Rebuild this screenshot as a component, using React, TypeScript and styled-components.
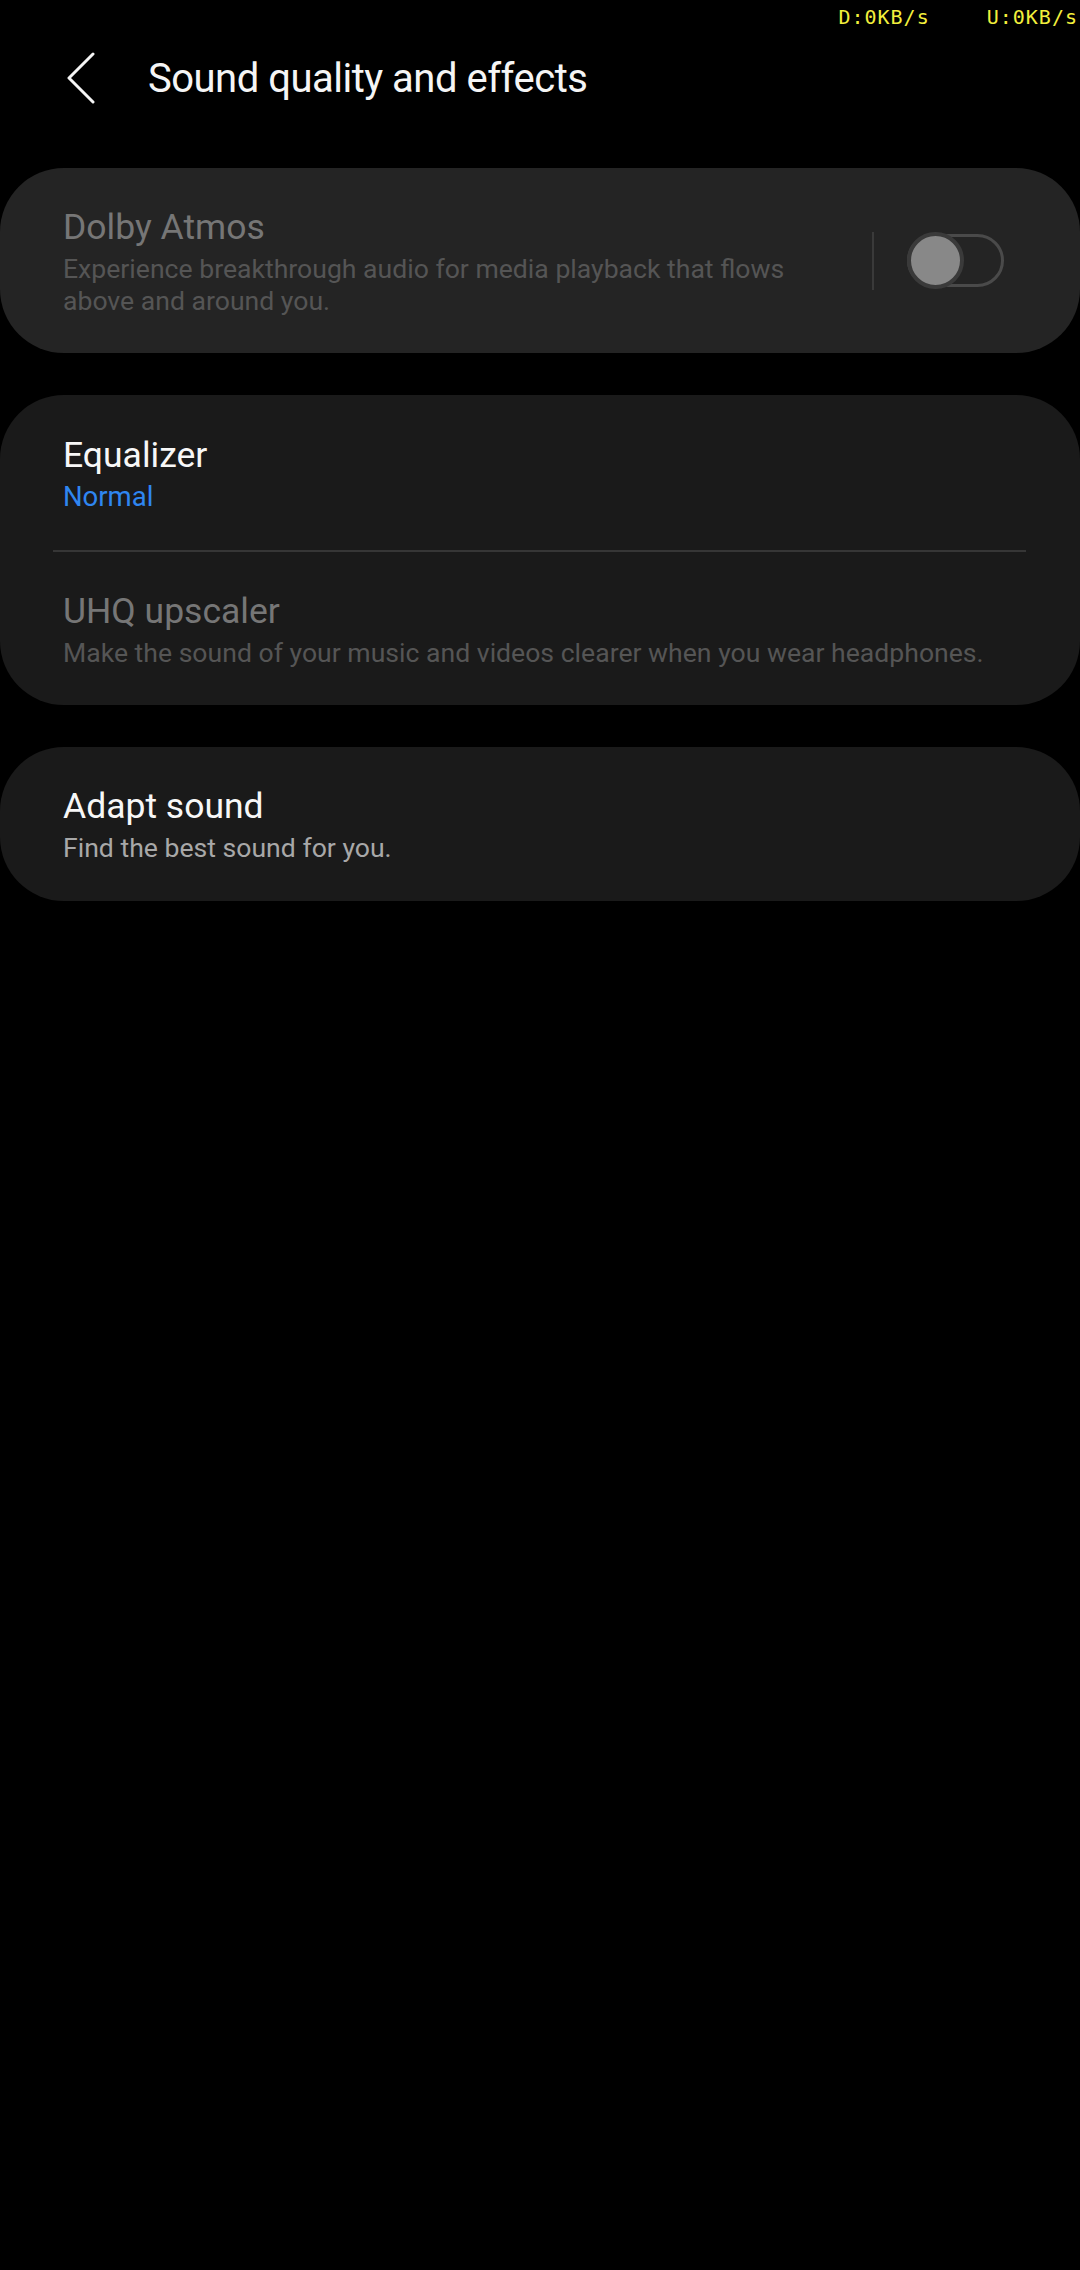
import React from "react";
import styled, { createGlobalStyle } from "styled-components";

const GlobalStyle = createGlobalStyle`
  html, body {
    margin: 0;
    padding: 0;
    background: #000;
  }
  body {
    font-family: Roboto, "Noto Sans", sans-serif;
    -webkit-font-smoothing: antialiased;
  }
`;

const Screen = styled.div`
  width: 1080px;
  min-height: 2270px;
  background: #000;
  display: flex;
  flex-direction: column;
`;

const StatusBar = styled.div`
  height: 34px;
  display: flex;
  justify-content: flex-end;
  align-items: center;
  gap: 57px;
  padding-right: 2px;
  font-family: "DejaVu Sans Mono", "Liberation Mono", monospace;
  font-size: 20px;
  letter-spacing: 1px;
  color: #f2ef3c;
`;

const Header = styled.header`
  height: 88px;
  display: flex;
  align-items: center;
  padding-left: 66px;
  gap: 50px;

  h1 {
    margin: 0;
    font-size: 40px;
    font-weight: 400;
    color: #f5f5f5;
    letter-spacing: -0.5px;
  }
`;

const BackButton = styled.button`
  width: 32px;
  height: 52px;
  padding: 0;
  border: 0;
  background: none;
  display: flex;
  align-items: center;
  justify-content: center;
`;

const List = styled.main`
  display: flex;
  flex-direction: column;
  gap: 42px;
  padding-top: 46px;
`;

const Card = styled.section<{ $active?: boolean }>`
  background: ${(p) => (p.$active ? "#242424" : "#1a1a1a")};
  border-radius: 64px;
  display: flex;
  flex-direction: column;
`;

const Row = styled.div<{ $height: number }>`
  min-height: ${(p) => p.$height}px;
  display: flex;
  align-items: center;
  padding: 0 63px;
`;

const TextBlock = styled.div`
  flex: 1;
  display: flex;
  flex-direction: column;
`;

const Title = styled.div<{ $dim?: boolean }>`
  font-size: 35.5px;
  line-height: 44px;
  color: ${(p) => (p.$dim ? "#767676" : "#f7f7f7")};
`;

const Sub = styled.div<{ $tone: "dim" | "gray" | "blue" }>`
  font-size: ${(p) => (p.$tone === "blue" ? "27.5px" : "26.6px")};
  line-height: 32px;
  margin-top: 4px;
  color: ${(p) =>
    p.$tone === "blue" ? "#2f86f0" : p.$tone === "gray" ? "#a8a8a8" : "#555555"};
`;

const Divider = styled.div`
  height: 2px;
  margin: 0 54px 0 53px;
  background: #363636;
`;

const SwitchArea = styled.div`
  display: flex;
  align-items: center;
  gap: 33px;
  margin-right: 13px;
`;

const VLine = styled.div`
  width: 2px;
  height: 58px;
  background: #3a3a3a;
`;

const Track = styled.div`
  position: relative;
  width: 97px;
  height: 53px;
  box-sizing: border-box;
  border: 3px solid #4a4a4a;
  border-radius: 27px;
`;

const Thumb = styled.div`
  position: absolute;
  left: -3px;
  top: -5px;
  width: 57px;
  height: 57px;
  box-sizing: border-box;
  border-radius: 50%;
  background: #888888;
  border: 4px solid #3a3a3a;
`;

export default function App() {
  return (
    <Screen>
      <GlobalStyle />
      <StatusBar>
        <span>D:0KB/s</span>
        <span>U:0KB/s</span>
      </StatusBar>
      <Header>
        <BackButton aria-label="Back">
          <svg width="32" height="52" viewBox="0 0 32 52">
            <path
              d="M27 2 L3 26 L27 50"
              fill="none"
              stroke="#f5f5f5"
              strokeWidth="3"
              strokeLinecap="round"
              strokeLinejoin="round"
            />
          </svg>
        </BackButton>
        <h1>Sound quality and effects</h1>
      </Header>
      <List>
        <Card $active>
          <Row $height={185}>
            <TextBlock>
              <Title $dim>Dolby Atmos</Title>
              <Sub $tone="dim">
                Experience breakthrough audio for media playback that flows
                <br />
                above and around you.
              </Sub>
            </TextBlock>
            <SwitchArea>
              <VLine />
              <Track>
                <Thumb />
              </Track>
            </SwitchArea>
          </Row>
        </Card>
        <Card>
          <Row $height={155}>
            <TextBlock>
              <Title>Equalizer</Title>
              <Sub $tone="blue">Normal</Sub>
            </TextBlock>
          </Row>
          <Divider />
          <Row $height={153}>
            <TextBlock>
              <Title $dim>UHQ upscaler</Title>
              <Sub $tone="dim">
                Make the sound of your music and videos clearer when you wear headphones.
              </Sub>
            </TextBlock>
          </Row>
        </Card>
        <Card>
          <Row $height={154}>
            <TextBlock>
              <Title>Adapt sound</Title>
              <Sub $tone="gray">Find the best sound for you.</Sub>
            </TextBlock>
          </Row>
        </Card>
      </List>
    </Screen>
  );
}
